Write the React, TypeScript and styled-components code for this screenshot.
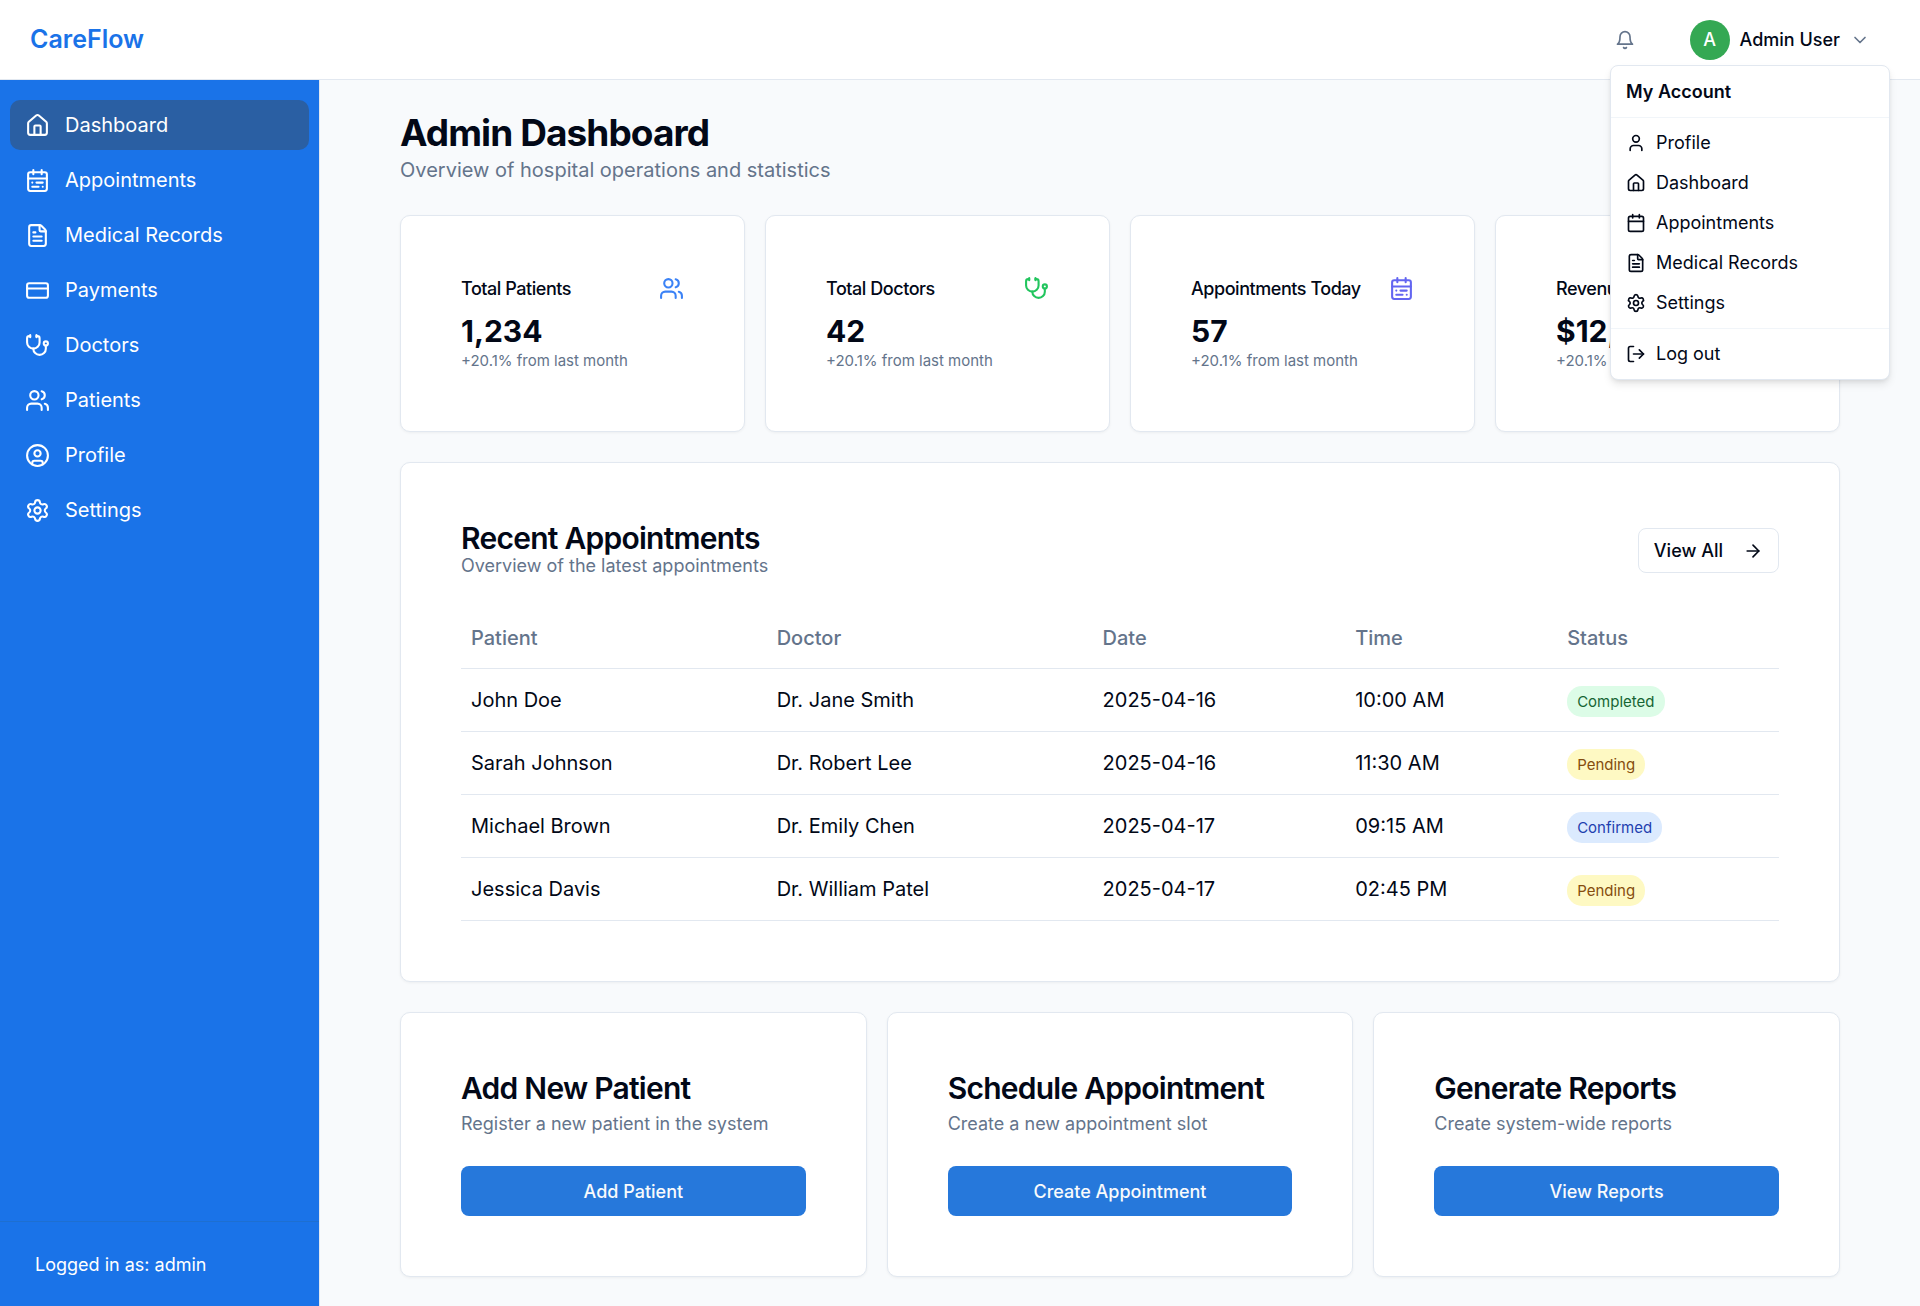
import React from "react";
import styled, { createGlobalStyle } from "styled-components";
import {
  ArrowRight,
  Calendar,
  CalendarRange,
  ChevronDown,
  CircleUser,
  CreditCard,
  FileText,
  House,
  LogOut,
  Settings,
  Stethoscope,
  User,
  Users,
  type LucideIcon,
} from "lucide-react";

const color = {
  brand: "#1a73e8",
  brandDark: "#2a5fa3",
  action: "#2678db",
  green: "#34a853",
  text: "#020817",
  muted: "#64748b",
  border: "#e2e8f0",
  divider: "#f1f5f9",
  page: "#f8fafc",
};

const GlobalStyle = createGlobalStyle`
  *, *::before, *::after { box-sizing: border-box; }
  body {
    margin: 0;
    font-family: Inter, "Liberation Sans", sans-serif;
    font-size: 20px;
    line-height: 30px;
    color: ${color.text};
    background: ${color.page};
  }
  h1, h2, h3, p, ul { margin: 0; padding: 0; }
  ul { list-style: none; }
  a { color: inherit; text-decoration: none; }
  button { font: inherit; color: inherit; cursor: pointer; }
  svg { display: block; flex-shrink: 0; }
`;

const Shell = styled.div`
  display: flex;
  flex-direction: column;
  min-height: 100vh;
`;

const Header = styled.header`
  display: flex;
  align-items: center;
  justify-content: space-between;
  height: 80px;
  padding: 0 30px;
  background: #fff;
  border-bottom: 1px solid ${color.border};
`;

const Logo = styled.a`
  font-size: 25px;
  line-height: 35px;
  font-weight: 600;
  color: ${color.brand};
`;

const HeaderActions = styled.div`
  display: flex;
  align-items: center;
  gap: 20px;
`;

const IconButton = styled.button`
  display: flex;
  align-items: center;
  justify-content: center;
  width: 50px;
  height: 50px;
  padding: 0;
  border: 0;
  border-radius: 8px;
  background: transparent;
  color: ${color.muted};
`;

const Account = styled.div`
  position: relative;
`;

const AccountButton = styled.button`
  display: flex;
  align-items: center;
  gap: 10px;
  height: 50px;
  padding: 0 20px;
  border: 0;
  border-radius: 8px;
  background: transparent;
  font-size: 18px;
  line-height: 25px;
  font-weight: 500;

  svg { color: ${color.muted}; }
`;

const Avatar = styled.span`
  display: flex;
  align-items: center;
  justify-content: center;
  width: 40px;
  height: 40px;
  border-radius: 50%;
  background: ${color.green};
  color: #fff;
`;

const Menu = styled.div`
  position: absolute;
  top: 100%;
  right: 0;
  z-index: 10;
  width: 280px;
  padding: 6px 5px 5px;
  background: #fff;
  border: 1px solid ${color.border};
  border-radius: 8px;
  box-shadow: 0 5px 8px -1px rgba(0, 0, 0, 0.1), 0 2px 5px -2px rgba(0, 0, 0, 0.1);
  font-size: 18px;
  line-height: 24px;
`;

const MenuLabel = styled.div`
  padding: 8px 10px;
  font-weight: 600;
`;

const MenuLink = styled.a`
  display: flex;
  align-items: center;
  gap: 10px;
  padding: 8px 10px;
`;

const MenuDivider = styled.hr`
  height: 1px;
  margin: 5px -5px;
  border: 0;
  background: ${color.divider};
`;

const Body = styled.div`
  display: flex;
  flex: 1;
`;

const Sidebar = styled.aside`
  display: flex;
  flex-direction: column;
  flex-shrink: 0;
  width: 320px;
  background: ${color.brand};
  background-clip: padding-box;
  border-right: 1px solid ${color.border};
  color: #fff;
`;

const NavList = styled.ul`
  display: flex;
  flex: 1;
  flex-direction: column;
  gap: 5px;
  padding: 20px 10px;
`;

const NavLink = styled.a<{ $active?: boolean }>`
  display: flex;
  align-items: center;
  gap: 15px;
  padding: 10px 15px;
  border-radius: 10px;
  background: ${(p) => (p.$active ? color.brandDark : "transparent")};
`;

const SidebarFooter = styled.div`
  padding: 30px 35px;
  border-top: 1px solid #1e6fd0;
  font-size: 18px;
  line-height: 25px;
`;

const Main = styled.main`
  flex: 1;
  min-width: 0;
  padding: 30px 80px;
`;

const Content = styled.div`
  display: flex;
  flex-direction: column;
  gap: 30px;
  max-width: 1440px;
  margin: 0 auto;
`;

const PageTitle = styled.h1`
  font-size: 37px;
  line-height: 45px;
  font-weight: 700;
  letter-spacing: -0.025em;
`;

const PageSubtitle = styled.p`
  color: ${color.muted};
`;

const CardGrid = styled.div<{ $columns: number }>`
  display: grid;
  grid-template-columns: repeat(${(p) => p.$columns}, minmax(0, 1fr));
  gap: 20px;
`;

const Card = styled.section`
  padding: 60px;
  background: #fff;
  border: 1px solid ${color.border};
  border-radius: 10px;
  box-shadow: 0 1px 3px rgba(0, 0, 0, 0.05);
`;

const StatHeader = styled.div<{ $tone: string }>`
  display: flex;
  align-items: center;
  justify-content: space-between;
  padding-bottom: 10px;

  svg { color: ${(p) => p.$tone}; }
`;

const StatLabel = styled.h3`
  font-size: 18px;
  line-height: 25px;
  font-weight: 500;
  letter-spacing: -0.025em;
`;

const StatValue = styled.p`
  font-size: 30px;
  line-height: 40px;
  font-weight: 700;
`;

const StatNote = styled.p`
  font-size: 15px;
  line-height: 20px;
  color: ${color.muted};
`;

const SectionHeader = styled.div`
  display: flex;
  align-items: center;
  justify-content: space-between;
  padding-bottom: 30px;
`;

const CardTitle = styled.h2`
  font-size: 30px;
  line-height: 30px;
  font-weight: 600;
  letter-spacing: -0.025em;
`;

const CardText = styled.p`
  font-size: 18px;
  line-height: 25px;
  color: ${color.muted};
`;

const OutlineButton = styled.button`
  display: flex;
  align-items: center;
  gap: 20px;
  height: 45px;
  padding: 0 15px;
  background: #fff;
  border: 1px solid ${color.border};
  border-radius: 8px;
  font-size: 18px;
  line-height: 25px;
  font-weight: 500;
`;

const Table = styled.table`
  width: 100%;
  border-collapse: separate;
  border-spacing: 0;
  text-align: left;
`;

const HeadCell = styled.th`
  height: 61px;
  padding: 0 10px;
  border-bottom: 1px solid ${color.border};
  font-weight: 500;
  color: ${color.muted};
`;

const Cell = styled.td`
  padding: 16px 10px;
  border-bottom: 1px solid ${color.border};
`;

const statusTone = {
  Completed: { bg: "#dcfce7", fg: "#166534" },
  Pending: { bg: "#fef9c3", fg: "#854d0e" },
  Confirmed: { bg: "#dbeafe", fg: "#1e40af" },
};

type Status = keyof typeof statusTone;

const Badge = styled.span<{ $status: Status }>`
  padding: 6px 10px;
  border-radius: 15px;
  background: ${(p) => statusTone[p.$status].bg};
  color: ${(p) => statusTone[p.$status].fg};
  font-size: 15px;
  line-height: 20px;
`;

const ActionHeader = styled.div`
  display: flex;
  flex-direction: column;
  gap: 8px;
  padding-bottom: 30px;
`;

const PrimaryButton = styled.button`
  display: block;
  width: 100%;
  height: 50px;
  padding: 0 20px;
  border: 0;
  border-radius: 8px;
  background: ${color.action};
  color: ${color.page};
  font-size: 18px;
  line-height: 25px;
  font-weight: 500;
`;

function BellIcon() {
  return (
    <svg
      width="20"
      height="20"
      viewBox="0 0 24 24"
      fill="none"
      stroke="currentColor"
      strokeWidth="2"
      strokeLinecap="round"
      strokeLinejoin="round"
      aria-hidden="true"
    >
      <path d="M6 8a6 6 0 0 1 12 0c0 7 3 9 3 9H3s3-2 3-9" />
      <path d="M10.3 21a1.94 1.94 0 0 0 3.4 0" />
    </svg>
  );
}

const navItems: { label: string; icon: LucideIcon }[] = [
  { label: "Dashboard", icon: House },
  { label: "Appointments", icon: CalendarRange },
  { label: "Medical Records", icon: FileText },
  { label: "Payments", icon: CreditCard },
  { label: "Doctors", icon: Stethoscope },
  { label: "Patients", icon: Users },
  { label: "Profile", icon: CircleUser },
  { label: "Settings", icon: Settings },
];

const menuItems: { label: string; icon: LucideIcon }[] = [
  { label: "Profile", icon: User },
  { label: "Dashboard", icon: House },
  { label: "Appointments", icon: Calendar },
  { label: "Medical Records", icon: FileText },
  { label: "Settings", icon: Settings },
];

const stats: { label: string; value: string; icon: LucideIcon; tone: string }[] = [
  { label: "Total Patients", value: "1,234", icon: Users, tone: "#3b82f6" },
  { label: "Total Doctors", value: "42", icon: Stethoscope, tone: "#22c55e" },
  { label: "Appointments Today", value: "57", icon: CalendarRange, tone: "#6366f1" },
  { label: "Revenue", value: "$12,345", icon: CreditCard, tone: "#f59e0b" },
];

const appointments: { patient: string; doctor: string; date: string; time: string; status: Status }[] = [
  { patient: "John Doe", doctor: "Dr. Jane Smith", date: "2025-04-16", time: "10:00 AM", status: "Completed" },
  { patient: "Sarah Johnson", doctor: "Dr. Robert Lee", date: "2025-04-16", time: "11:30 AM", status: "Pending" },
  { patient: "Michael Brown", doctor: "Dr. Emily Chen", date: "2025-04-17", time: "09:15 AM", status: "Confirmed" },
  { patient: "Jessica Davis", doctor: "Dr. William Patel", date: "2025-04-17", time: "02:45 PM", status: "Pending" },
];

const actions = [
  { title: "Add New Patient", text: "Register a new patient in the system", button: "Add Patient" },
  { title: "Schedule Appointment", text: "Create a new appointment slot", button: "Create Appointment" },
  { title: "Generate Reports", text: "Create system-wide reports", button: "View Reports" },
];

export default function App() {
  return (
    <Shell>
      <GlobalStyle />
      <Header>
        <Logo href="#">CareFlow</Logo>
        <HeaderActions>
          <IconButton type="button" aria-label="Notifications">
            <BellIcon />
          </IconButton>
          <Account>
            <AccountButton type="button" aria-haspopup="menu" aria-expanded="true">
              <Avatar>A</Avatar>
              Admin User
              <ChevronDown size={20} />
            </AccountButton>
            <Menu>
              <MenuLabel>My Account</MenuLabel>
              <MenuDivider />
              {menuItems.map(({ label, icon: Icon }) => (
                <MenuLink href="#" key={label}>
                  <Icon size={20} />
                  {label}
                </MenuLink>
              ))}
              <MenuDivider />
              <MenuLink href="#">
                <LogOut size={20} />
                Log out
              </MenuLink>
            </Menu>
          </Account>
        </HeaderActions>
      </Header>
      <Body>
        <Sidebar>
          <NavList>
            {navItems.map(({ label, icon: Icon }) => (
              <li key={label}>
                <NavLink href="#" $active={label === "Dashboard"}>
                  <Icon size={25} />
                  {label}
                </NavLink>
              </li>
            ))}
          </NavList>
          <SidebarFooter>Logged in as: admin</SidebarFooter>
        </Sidebar>
        <Main>
          <Content>
            <div>
              <PageTitle>Admin Dashboard</PageTitle>
              <PageSubtitle>Overview of hospital operations and statistics</PageSubtitle>
            </div>
            <CardGrid $columns={4}>
              {stats.map(({ label, value, icon: Icon, tone }) => (
                <Card key={label}>
                  <StatHeader $tone={tone}>
                    <StatLabel>{label}</StatLabel>
                    <Icon size={25} />
                  </StatHeader>
                  <StatValue>{value}</StatValue>
                  <StatNote>+20.1% from last month</StatNote>
                </Card>
              ))}
            </CardGrid>
            <Card>
              <SectionHeader>
                <div>
                  <CardTitle>Recent Appointments</CardTitle>
                  <CardText>Overview of the latest appointments</CardText>
                </div>
                <OutlineButton type="button">
                  View All
                  <ArrowRight size={20} />
                </OutlineButton>
              </SectionHeader>
              <Table>
                <thead>
                  <tr>
                    <HeadCell scope="col">Patient</HeadCell>
                    <HeadCell scope="col">Doctor</HeadCell>
                    <HeadCell scope="col">Date</HeadCell>
                    <HeadCell scope="col">Time</HeadCell>
                    <HeadCell scope="col">Status</HeadCell>
                  </tr>
                </thead>
                <tbody>
                  {appointments.map((a) => (
                    <tr key={a.patient}>
                      <Cell>{a.patient}</Cell>
                      <Cell>{a.doctor}</Cell>
                      <Cell>{a.date}</Cell>
                      <Cell>{a.time}</Cell>
                      <Cell>
                        <Badge $status={a.status}>{a.status}</Badge>
                      </Cell>
                    </tr>
                  ))}
                </tbody>
              </Table>
            </Card>
            <CardGrid $columns={3}>
              {actions.map(({ title, text, button }) => (
                <Card key={title}>
                  <ActionHeader>
                    <CardTitle>{title}</CardTitle>
                    <CardText>{text}</CardText>
                  </ActionHeader>
                  <PrimaryButton type="button">{button}</PrimaryButton>
                </Card>
              ))}
            </CardGrid>
          </Content>
        </Main>
      </Body>
    </Shell>
  );
}
